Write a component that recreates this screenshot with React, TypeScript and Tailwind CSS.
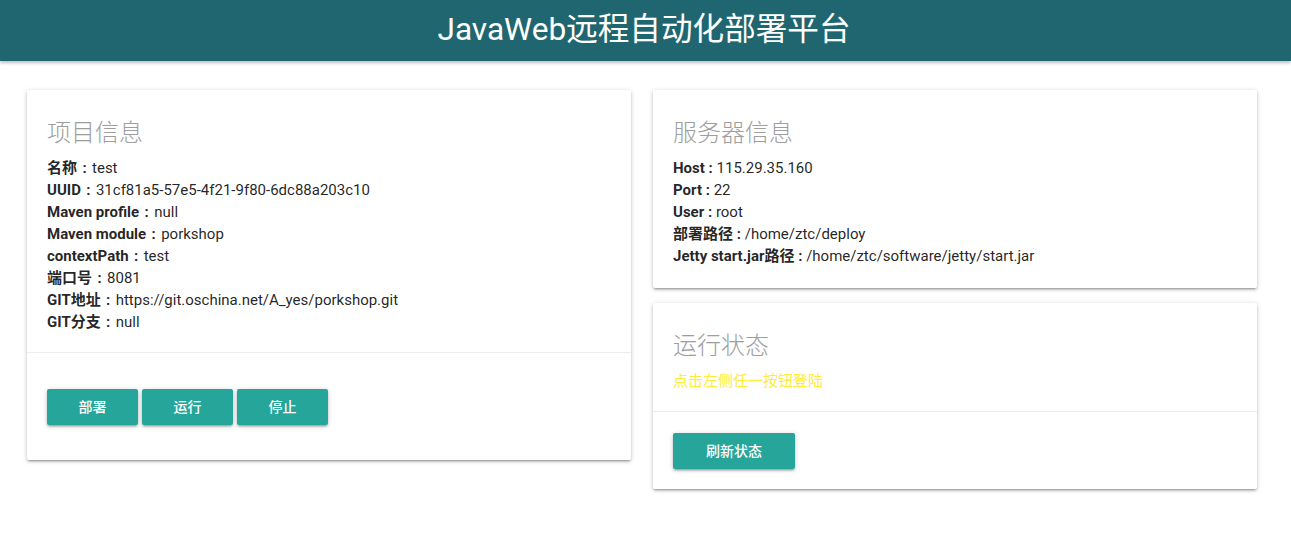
import React from 'react';

const font = { fontFamily: 'Roboto, "Noto Sans CJK SC", sans-serif' };
const cardShadow =
  'bg-white rounded-[2px] shadow-[0_2px_2px_0_rgba(0,0,0,0.14),0_3px_1px_-2px_rgba(0,0,0,0.12),0_1px_5px_0_rgba(0,0,0,0.2)]';
const btn =
  'h-9 rounded-[2px] bg-[#26a69a] text-white text-[14px] font-medium shadow-[0_2px_2px_0_rgba(0,0,0,0.14),0_3px_1px_-2px_rgba(0,0,0,0.12),0_1px_5px_0_rgba(0,0,0,0.2)]';

const Field: React.FC<{ label: string; value: string; wide?: boolean }> = ({ label, value, wide = true }) => (
  <p className="h-[22px] leading-[22px]">
    <b className="font-bold">
      {label}
      {wide ? <span className="inline-block w-[15px] text-center">:</span> : ' : '}
    </b>
    {value}
  </p>
);

export default function App() {
  const project = [
    ['名称', 'test'],
    ['UUID', '31cf81a5-57e5-4f21-9f80-6dc88a203c10'],
    ['Maven profile', 'null'],
    ['Maven module', 'porkshop'],
    ['contextPath', 'test'],
    ['端口号', '8081'],
    ['GIT地址', 'https://git.oschina.net/A_yes/porkshop.git'],
    ['GIT分支', 'null'],
  ];
  const server = [
    ['Host', '115.29.35.160'],
    ['Port', '22'],
    ['User', 'root'],
    ['部署路径', '/home/ztc/deploy'],
    ['Jetty start.jar路径', '/home/ztc/software/jetty/start.jar'],
  ];

  return (
    <div className="min-h-[538px] bg-white text-[15px] leading-[22px] text-[rgba(0,0,0,0.87)]" style={font}>
      <header className="h-[61px] bg-[#1f6670] flex items-center justify-center shadow-[0_2px_3px_rgba(0,0,0,0.25)]">
        <h1 className="text-white text-[31.6px] font-normal leading-none -mt-[2px] -ml-[3px]">JavaWeb远程自动化部署平台</h1>
      </header>

      <main className="flex items-start gap-[22px] pl-[27px] pt-[29px]">
        <section className={`${cardShadow} w-[604px]`}>
          <div className="pt-[27px] px-5 pb-[19px]">
            <h2 className="text-[24px] leading-[32px] font-light text-[#9e9e9e] mb-2">项目信息</h2>
            {project.map(([k, v]) => (
              <Field key={k} label={k} value={v} />
            ))}
          </div>
          <div className="border-t border-[rgba(160,160,160,0.2)] pt-[36px] pb-[35px] px-5 flex gap-1">
            <button className={`${btn} w-[91px]`}>部署</button>
            <button className={`${btn} w-[91px]`}>运行</button>
            <button className={`${btn} w-[91px]`}>停止</button>
          </div>
        </section>

        <div className="w-[604px] flex flex-col gap-[15px]">
          <section className={`${cardShadow}`}>
            <div className="pt-[27px] px-5 pb-[21px]">
              <h2 className="text-[24px] leading-[32px] font-light text-[#9e9e9e] mb-2">服务器信息</h2>
              {server.map(([k, v]) => (
                <Field key={k} label={k} value={v} wide={false} />
              ))}
            </div>
          </section>

          <section className={`${cardShadow}`}>
            <div className="pt-[27px] px-5 pb-[19px]">
              <h2 className="text-[24px] leading-[32px] font-light text-[#9e9e9e] mb-2">运行状态</h2>
              <p className="text-[#ffeb3b]">点击左侧任一按钮登陆</p>
            </div>
            <div className="border-t border-[rgba(160,160,160,0.2)] pt-[21px] pb-[20px] px-5">
              <button className={`${btn} w-[122px]`}>刷新状态</button>
            </div>
          </section>
        </div>
      </main>
    </div>
  );
}
